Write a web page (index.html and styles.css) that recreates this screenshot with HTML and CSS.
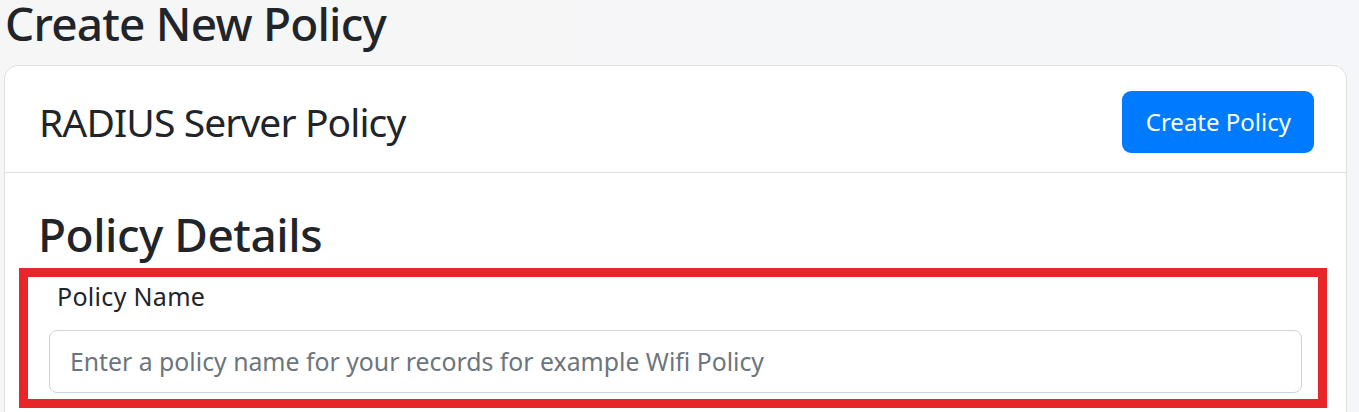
FILE: index.html
```html
<!DOCTYPE html>
<html lang="en">
<head>
<meta charset="utf-8">
<title>Create New Policy</title>
<link rel="stylesheet" href="styles.css">
</head>
<body>
<main class="page">
  <h1 class="page-title">Create New Policy</h1>
  <section class="card">
    <header class="card-header">
      <h3 class="card-title">RADIUS Server Policy</h3>
      <button class="btn-primary" type="button">Create Policy</button>
    </header>
    <div class="card-body">
      <h2 class="section-title">Policy Details</h2>
      <div class="form-group">
        <label class="form-label" for="policyName">Policy Name</label>
        <input class="form-control" id="policyName" type="text" placeholder="Enter a policy name for your records for example Wifi Policy">
        <div class="highlight"></div>
      </div>
    </div>
  </section>
</main>
</body>
</html>
```
FILE: styles.css
```css
* { box-sizing: border-box; }
html, body { margin: 0; padding: 0; }
body {
  background: linear-gradient(90deg, #f6f6f6 0%, #f5f6f9 100%);
  font-family: "Noto Sans", "Open Sans", "DejaVu Sans", sans-serif;
  color: #212529;
  height: 412px;
  overflow: hidden;
}
.page {
  padding: 0 12px 0 4px;
}
.page-title {
  font-size: 46px;
  font-weight: 500;
  letter-spacing: -0.8px;
  line-height: 1.2;
  margin: -4px 0 14px 1px;
}
.card {
  background: #fff;
  border: 1px solid #dfdfdf;
  border-radius: 14px;
}
.card-header {
  display: flex;
  align-items: center;
  justify-content: space-between;
  padding: 25px 32px 19px 34px;
  border-bottom: 1px solid #dfdfdf;
}
.card-title {
  font-size: 39px;
  font-weight: 400;
  letter-spacing: -0.9px;
  line-height: 1.2;
  margin: 0;
}
.btn-primary {
  height: 62px;
  padding: 0 23px 0 24px;
  border: none;
  border-radius: 9px;
  background: #007bff;
  color: #fff;
  font-family: inherit;
  font-size: 24px;
  line-height: 1;
}
.card-body {
  padding: 34px 30px 40px 30px;
}
.section-title {
  font-size: 46px;
  font-weight: 500;
  letter-spacing: -0.5px;
  line-height: 1.2;
  margin: 0 0 16px 3px;
}
.form-group {
  position: relative;
  display: flex;
  flex-direction: column;
  padding: 0 14px;
}
.form-label {
  font-size: 25px;
  letter-spacing: 0.3px;
  line-height: 1.5;
  margin: 0 0 14px 8px;
}
.form-control {
  height: 63px;
  padding: 0 20px;
  border: 1px solid #ced4da;
  border-radius: 8px;
  font-family: inherit;
  font-size: 24.8px;
  color: #495057;
  background: #fff;
}
.form-control::placeholder { color: #6c757d; opacity: 1; }
.highlight {
  position: absolute;
  left: -16px;
  right: -11px;
  bottom: -15px;
  height: 140px;
  border: 9px solid #e8262a;
  pointer-events: none;
}
```
